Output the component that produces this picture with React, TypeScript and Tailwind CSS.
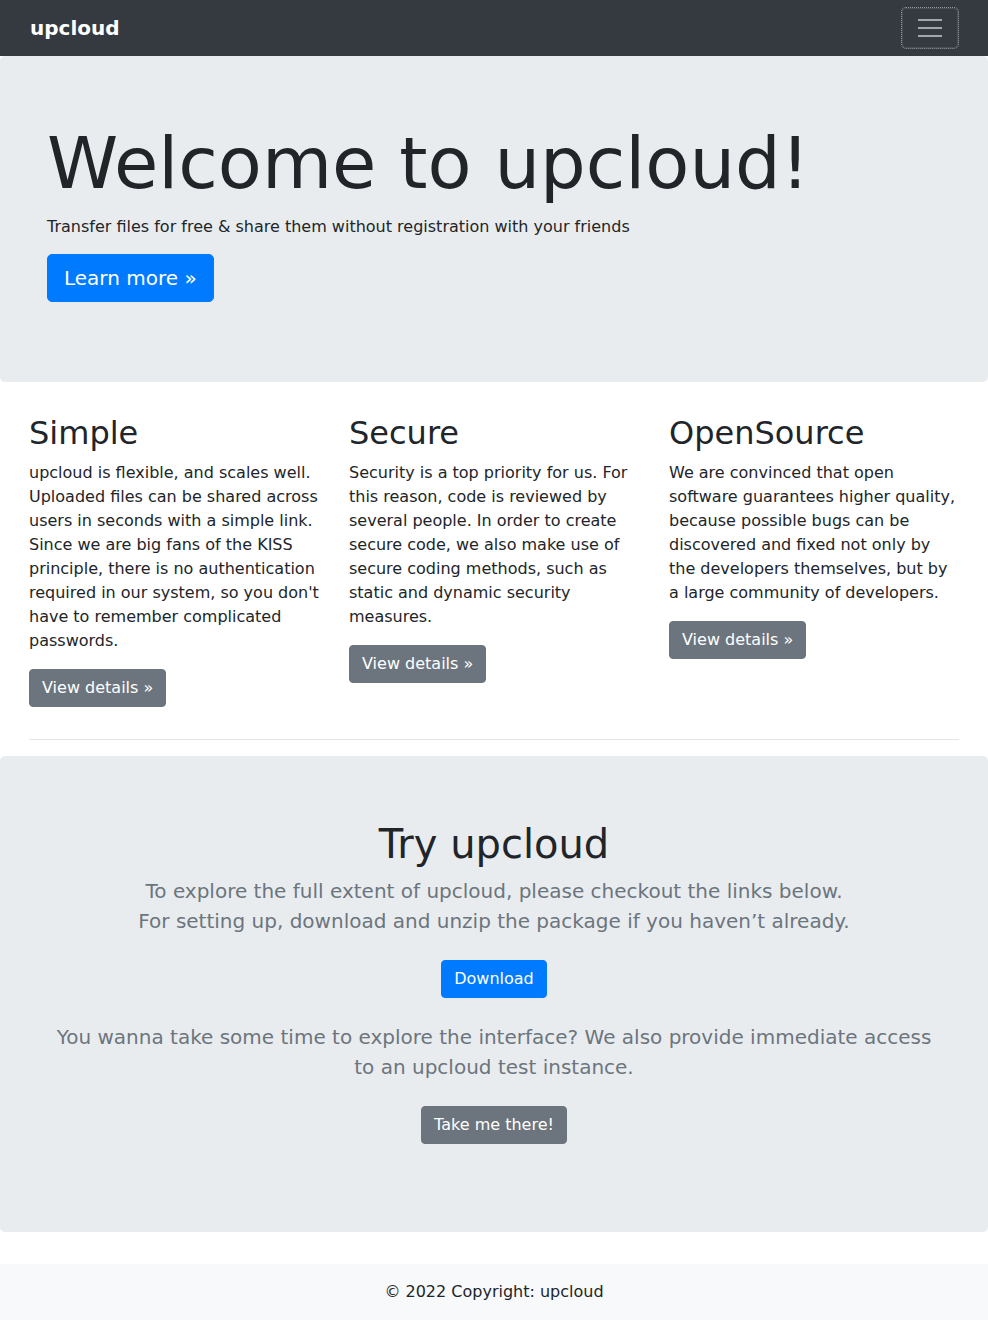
const features = [
  {
    title: "Simple",
    text: "upcloud is flexible, and scales well. Uploaded files can be shared across users in seconds with a simple link. Since we are big fans of the KISS principle, there is no authentication required in our system, so you don't have to remember complicated passwords.",
  },
  {
    title: "Secure",
    text: "Security is a top priority for us. For this reason, code is reviewed by several people. In order to create secure code, we also make use of secure coding methods, such as static and dynamic security measures.",
  },
  {
    title: "OpenSource",
    text: "We are convinced that open software guarantees higher quality, because possible bugs can be discovered and fixed not only by the developers themselves, but by a large community of developers.",
  },
];

function Navbar() {
  return (
    <nav className="flex h-14 items-center justify-between bg-[#343a40] pl-[30px] pr-[30px]">
      <a href="#" className="text-xl font-bold leading-[30px] text-white">
        upcloud
      </a>
      <button className="flex h-10 w-14 flex-col items-center justify-center gap-[6px] rounded border border-white/10 outline-1 outline-dotted outline-white/50">
        <span className="block h-[2px] w-6 bg-white/55" />
        <span className="block h-[2px] w-6 bg-white/55" />
        <span className="block h-[2px] w-6 bg-white/55" />
      </button>
    </nav>
  );
}

export default function App() {
  return (
    <div className="font-['DejaVu_Sans',sans-serif] text-base leading-6 text-[#212529]">
      <Navbar />

      <main>
        <div className="mb-8 rounded-[5px] bg-[#e9ecef] px-8 py-16">
          <div className="px-[15px]">
            <h1 className="mb-2 text-[72px] font-normal leading-[1.2]">
              Welcome to upcloud!
            </h1>
            <p className="mb-[15px] pt-px">
              Transfer files for free &amp; share them without registration
              with your friends
            </p>
            <p className="mb-4">
              <a
                href="#"
                className="inline-block rounded-[5px] border border-[#007bff] bg-[#007bff] px-4 py-2 text-xl leading-[30px] text-white"
              >
                Learn more »
              </a>
            </p>
          </div>
        </div>

        <div className="mx-auto max-w-[960px] px-[15px]">
          <div className="grid grid-cols-3 gap-[30px]">
            {features.map((f) => (
              <div key={f.title}>
                <h2 className="mb-2 text-[32px] font-normal leading-[1.2]">
                  {f.title}
                </h2>
                <p className="mb-4">{f.text}</p>
                <p className="mb-4">
                  <a
                    href="#"
                    className="inline-block rounded border border-[#6c757d] bg-[#6c757d] px-3 py-1.5 leading-6 text-white"
                  >
                    View details »
                  </a>
                </p>
              </div>
            ))}
          </div>
          <hr className="my-4 border-black/10" />
        </div>

        <div className="mb-8 rounded-[5px] bg-[#e9ecef] px-8 py-16 text-center">
          <div className="px-[15px]">
            <h1 className="mb-2 text-[40px] font-normal leading-[1.2]">
              Try upcloud
            </h1>
            <p className="mb-6 text-xl leading-[30px] text-[#6c757d]">
              To explore the full extent of upcloud, please checkout the links
              below.
              <br />
              For setting up, download and unzip the package if you haven’t
              already.
            </p>
            <div>
              <a
                href="#"
                className="inline-block rounded border border-[#007bff] bg-[#007bff] px-3 py-1.5 leading-6 text-white"
              >
                Download
              </a>
            </div>
            <p className="mt-6 text-xl leading-[30px] text-[#6c757d]">
              You wanna take some time to explore the interface? We also
              provide immediate access
              <br />
              to an upcloud test instance.
            </p>
            <div className="mb-6 mt-6">
              <a
                href="#"
                className="inline-block rounded border border-[#6c757d] bg-[#6c757d] px-3 py-1.5 leading-6 text-white"
              >
                Take me there!
              </a>
            </div>
          </div>
        </div>
      </main>

      <footer className="bg-[#f8f9fa] py-4 text-center">
        © 2022 Copyright:{" "}
        <a href="#" className="text-[#212529]">
          upcloud
        </a>
      </footer>
    </div>
  );
}
